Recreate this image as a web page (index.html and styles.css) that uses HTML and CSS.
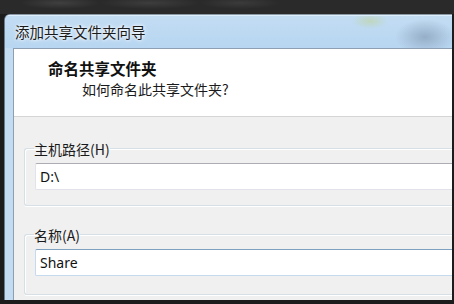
FILE: index.html
```html
<!DOCTYPE html>
<html lang="zh-CN">
<head>
<meta charset="utf-8">
<title>添加共享文件夹向导</title>
<link rel="stylesheet" href="styles.css">
</head>
<body>
<div class="screen">
  <div class="topband"></div>
  <div class="window">
    <div class="titlebar">添加共享文件夹向导</div>
    <div class="frame">
      <div class="client">
        <div class="header">
          <div class="h-title">命名共享文件夹</div>
          <div class="h-sub">如何命名此共享文件夹?</div>
        </div>
        <div class="body">
          <fieldset class="group">
            <legend class="legend">主机路径(H)</legend>
            <div class="input">D:\</div>
          </fieldset>
          <fieldset class="group group2">
            <legend class="legend">名称(A)</legend>
            <div class="input focused">Share</div>
          </fieldset>
        </div>
      </div>
    </div>
  </div>
</div>
</body>
</html>
```
FILE: styles.css
```css
html, body {
  margin: 0;
  padding: 0;
}
body {
  width: 454px;
  height: 304px;
  overflow: hidden;
  background: #1c1c1c;
  font-family: "Noto Sans CJK SC", "Noto Sans", sans-serif;
}
.screen {
  width: 454px;
  height: 304px;
  overflow: hidden;
  display: flex;
  flex-direction: column;
}
.topband {
  height: 14px;
  flex: none;
  background:
    radial-gradient(ellipse 40px 6px at 60px 3px, rgba(90,90,90,0.45), rgba(90,90,90,0) 100%),
    radial-gradient(ellipse 50px 6px at 150px 3px, rgba(90,90,90,0.4), rgba(90,90,90,0) 100%),
    radial-gradient(ellipse 40px 6px at 240px 3px, rgba(90,90,90,0.35), rgba(90,90,90,0) 100%),
    #2a2a2a;
}
.window {
  margin-left: 4px;
  width: 448px;
  height: 286px;
  flex: none;
  border-top: 1px solid #8a98a8;
  border-left: 1px solid #6d7c8c;
  border-top-left-radius: 6px;
  background: linear-gradient(90deg, #c4dcf2 0%, #bcd7f1 60%, #b9d4ee 100%);
  display: flex;
  flex-direction: column;
  overflow: hidden;
  box-sizing: border-box;
}
.titlebar {
  height: 33px;
  flex: none;
  padding-left: 10px;
  line-height: 33px;
  font-size: 14.5px;
  color: #1a1a1a;
  text-shadow: 0 0 5px #ffffff, 0 0 3px #ffffff;
  box-shadow: inset 0 1px 0 #dfeefb;
  background:
    radial-gradient(ellipse 30px 18px at 420px 22px, rgba(120,140,165,0.55), rgba(120,140,165,0) 100%),
    radial-gradient(ellipse 18px 8px at 365px 6px, rgba(190,210,140,0.5), rgba(190,210,140,0) 100%),
    linear-gradient(180deg, #c2dcf3 0%, #b8d6f1 100%);
}
.frame {
  flex: 1;
  display: flex;
  padding-left: 8px;
  min-height: 0;
}
.client {
  flex: 1;
  border-left: 1px solid #8e9fb1;
  border-top: 1px solid #8e9fb1;
  background: #f0f0f0;
  display: flex;
  flex-direction: column;
}
.header {
  flex: none;
  background: #ffffff;
  border-bottom: 1px solid #d5d5d5;
  padding-left: 34px;
  padding-top: 9px;
  box-sizing: border-box;
  height: 68px;
}
.h-title {
  font-size: 15.5px;
  font-weight: bold;
  line-height: 21px;
  color: #111111;
}
.h-sub {
  font-size: 14px;
  line-height: 20px;
  padding-left: 34px;
  color: #1a1a1a;
}
.body {
  flex: 1;
  padding-left: 10px;
  display: flex;
  flex-direction: column;
}
.group {
  margin: 20px 0 0 0;
  padding: 0 0 15px 10px;
  border: 1px solid #d5dfe5;
  border-right: none;
  border-radius: 3px 0 0 3px;
  box-shadow: inset 1px 1px 0 #ffffff, 0 1px 0 #ffffff;
  min-width: 0;
}
.group2 {
  margin-top: 17px;
  padding-bottom: 18px;
}
.legend {
  padding: 2px 0 0 0;
  margin-left: -1px;
  font-size: 14px;
  line-height: 20px;
  color: #1a1a1a;
}
.input {
  margin-top: 4px;
  height: 27px;
  box-sizing: border-box;
  background: #ffffff;
  border: 1px solid #e2e3ea;
  border-top-color: #abadb3;
  border-right: none;
  border-radius: 2px 0 0 2px;
  padding-left: 4px;
  font-family: "Noto Sans", "Open Sans", sans-serif;
  font-size: 14px;
  line-height: 25px;
  color: #111111;
}
.focused {
  border-color: #c5daed;
  border-top-color: #7fa1c0;
}
```
